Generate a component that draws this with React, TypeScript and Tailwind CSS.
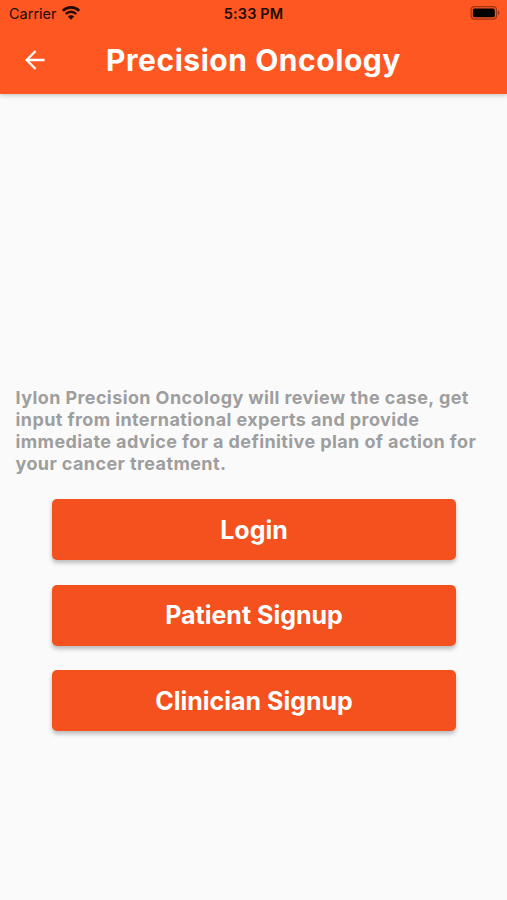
import { memo } from "react";

// ============================================================================
// Status Bar
// ============================================================================

const WifiIcon = memo(function WifiIcon() {
  return (
    <svg width="18" height="14" viewBox="0 0 18 14" fill="none" className="-mt-px">
      <path d="M0.9 4.8a11.4 11.4 0 0 1 16.2 0" stroke="currentColor" strokeWidth="2.7" />
      <path d="M3.8 8a7.3 7.3 0 0 1 10.4 0" stroke="currentColor" strokeWidth="2.4" />
      <path d="M9 13.7 5.9 10.5a4.4 4.4 0 0 1 6.2 0Z" fill="currentColor" />
    </svg>
  );
});

const BatteryIcon = memo(function BatteryIcon() {
  return (
    <svg width="31" height="14" viewBox="0 0 31 14" fill="none">
      <rect x="1.1" y="0.7" width="25.4" height="12.4" rx="3.4" stroke="#000" strokeOpacity="0.4" strokeWidth="1.2" />
      <rect x="2.8" y="2.5" width="22" height="8.8" rx="1.6" fill="#000" />
      <path d="M27.8 4.7c2.3.5 2.3 3.9 0 4.4Z" fill="#000" fillOpacity="0.4" />
    </svg>
  );
});

function StatusBar() {
  return (
    <div className="grid h-[27px] grid-cols-3 items-center pr-1.5 pl-[9px] text-[#210b05]">
      <div className="flex items-center gap-[5px]">
        <span className="pt-0.5 text-[14.5px] leading-none">Carrier</span>
        <WifiIcon />
      </div>
      <span className="pt-0.5 pr-[3px] text-center text-[14.5px] leading-none font-semibold tracking-[0.1px]">
        5:33 PM
      </span>
      <div className="flex justify-end pb-px">
        <BatteryIcon />
      </div>
    </div>
  );
}

// ============================================================================
// App Bar
// ============================================================================

function AppBar() {
  return (
    <header className="relative z-10 h-[94px] bg-[#ff5722] shadow-[0_1px_5px_rgba(0,0,0,0.25)]">
      <StatusBar />
      <div className="grid h-[66px] grid-cols-[71px_1fr_71px] items-center">
        <button aria-label="Back" className="flex justify-center pr-px text-white">
          <svg width="20" height="20" viewBox="0 0 20 20" fill="none">
            <path d="M19.6 10H2M10.6 1 1.6 10l9 9" stroke="currentColor" strokeWidth="2.3" />
          </svg>
        </button>
        <h1 className="text-center text-[30px] leading-none font-bold tracking-[0.55px] whitespace-nowrap text-white">
          Precision Oncology
        </h1>
      </div>
    </header>
  );
}

// ============================================================================
// Welcome Screen
// ============================================================================

const ACTIONS = ["Login", "Patient Signup", "Clinician Signup"];

export default function App() {
  return (
    <div className="flex h-[900px] w-[507px] flex-col bg-[#fafafa] font-['Inter',sans-serif]">
      <AppBar />
      <main className="flex flex-col pt-[293px]">
        <p className="pl-[15.5px] text-[18px] leading-[22px] font-bold tracking-[0.4px] whitespace-nowrap text-[#9e9e9e]">
          Iylon Precision Oncology will review the case, get
          <br />
          input from international experts and provide
          <br />
          immediate advice for a definitive plan of action for
          <br />
          your cancer treatment.
        </p>
        <div className="mt-6 flex flex-col gap-[24.5px] pr-[51px] pl-[52px]">
          {ACTIONS.map((label) => (
            <button
              key={label}
              className="h-[61px] rounded-[5px] bg-[#f4511e] pt-px text-[25px] leading-none font-bold text-white shadow-[0_3px_4px_rgba(0,0,0,0.25)]"
            >
              {label}
            </button>
          ))}
        </div>
      </main>
    </div>
  );
}
